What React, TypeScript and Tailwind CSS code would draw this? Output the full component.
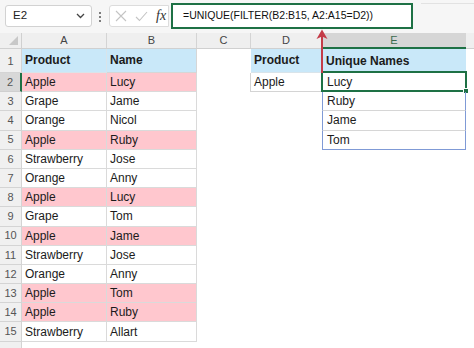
import React from "react";

const PINK = "bg-[#ffc7ce]";
const data: [string, string, boolean][] = [
  ["Apple", "Lucy", true],
  ["Grape", "Jame", false],
  ["Orange", "Nicol", false],
  ["Apple", "Ruby", true],
  ["Strawberry", "Jose", false],
  ["Orange", "Anny", false],
  ["Apple", "Lucy", true],
  ["Grape", "Tom", false],
  ["Apple", "Jame", true],
  ["Strawberry", "Jose", false],
  ["Orange", "Anny", false],
  ["Apple", "Tom", true],
  ["Apple", "Ruby", true],
  ["Strawberry", "Allart", false],
];
const unique = ["Lucy", "Ruby", "Jame", "Tom"];

export default function App() {
  return (
    <div className="relative w-[474px] h-[348px] overflow-hidden bg-white font-['Liberation_Sans',Arial,sans-serif] text-[#1b1b1b]">
      {/* formula bar */}
      <div className="h-[33px] bg-[#f6f6f6] flex items-start pt-[3px]">
        <div className="mt-[2px] ml-[5px] w-[87px] h-[22px] bg-white border border-[#d2d2d2] rounded-[3px] flex items-center justify-between pl-[7px] pr-[6px]">
          <span className="text-[11.5px] text-[#222]">E2</span>
          <svg width="9" height="6" viewBox="0 0 9 6">
            <path d="M1 1 L4.5 4.5 L8 1" fill="none" stroke="#444" strokeWidth="1.3" />
          </svg>
        </div>
        <div className="ml-[5px] mt-[9px] w-[6px] flex flex-col items-center gap-[2px]">
          <div className="w-[2px] h-[2px] rounded-full bg-[#555]" />
          <div className="w-[2px] h-[2px] rounded-full bg-[#555]" />
          <div className="w-[2px] h-[2px] rounded-full bg-[#555]" />
        </div>
        <div className="ml-[6px] mt-[2px] w-[60px] h-[22px] bg-white border border-[#dcdcdc] rounded-l-[3px] flex items-center pl-[5px]">
          <svg width="12" height="12" viewBox="0 0 12 12">
            <path d="M1 1 L11 11 M11 1 L1 11" stroke="#c4c4c4" strokeWidth="1.1" fill="none" />
          </svg>
          <svg className="ml-[8px]" width="13" height="11" viewBox="0 0 13 11">
            <path d="M1 6 L4.5 9.5 L12 1" stroke="#c4c4c4" strokeWidth="1.1" fill="none" />
          </svg>
          <span className="ml-[8px] font-['Liberation_Serif',serif] italic text-[14px] leading-none text-[#333]">fx</span>
        </div>
        <div className="ml-[2px] w-[242px] h-[26px] border-2 border-[#1e7145] bg-white flex items-center pl-[10px]">
          <span className="text-[10.5px] text-[#111] whitespace-nowrap">=UNIQUE(FILTER(B2:B15, A2:A15=D2))</span>
        </div>
        <div className="flex-1 mt-0 h-px bg-[#e2e2e2] ml-[8px]" />
      </div>

      {/* column headers */}
      <div className="flex h-[16px] bg-[#efefef] border-b border-[#d0d0d0] text-[11px] text-[#444]">
        <div className="relative w-[22px] border-r border-[#d0d0d0]">
          <svg className="absolute left-[9px] top-[3px]" width="9" height="9" viewBox="0 0 9 9">
            <path d="M9 0 L9 9 L0 9 Z" fill="#c8c8c8" />
          </svg>
        </div>
        <div className="w-[85px] border-r border-[#d4d4d4] flex items-center justify-center">A</div>
        <div className="w-[90px] border-r border-[#d4d4d4] flex items-center justify-center">B</div>
        <div className="w-[54px] border-r border-[#d4d4d4] flex items-center justify-center">C</div>
        <div className="w-[71px] border-r border-[#d4d4d4] flex items-center justify-center">D</div>
        <div className="w-[144px] bg-[#d6d6d6] border-b-2 border-[#1e7145] flex items-center justify-center text-[#3d6b4f] -mb-px">E</div>
        <div className="flex-1" />
      </div>

      {/* row 1 */}
      <div className="flex h-[24px] text-[12px]">
        <div className="w-[22px] bg-[#f0f0f0] border-r border-b border-[#d4d4d4] flex items-end justify-center pb-[3px] text-[11px] text-[#555]">1</div>
        <div className="w-[85px] bg-[#c9e8f9] border-r border-b border-[#d9e4ea] flex items-end pl-[3px] pb-[3px] font-bold">Product</div>
        <div className="w-[90px] bg-[#c9e8f9] border-r border-b border-[#d6d6d6] flex items-end pl-[3px] pb-[3px] font-bold">Name</div>
        <div className="w-[54px]" />
        <div className="w-[71px] bg-[#c9e8f9] flex items-end pl-[3px] pb-[3px] font-bold border-b border-[#d9e4ea]">Product</div>
        <div className="w-[144px] bg-[#c9e8f9] flex items-end pl-[4px] pb-[3px] font-bold">Unique Names</div>
        <div className="flex-1" />
      </div>

      {/* data rows */}
      {data.map(([prod, name, pink], i) => {
        const r = i + 2;
        const sel = r === 2;
        const eIdx = r - 2;
        const hasE = eIdx < unique.length;
        return (
          <div key={r} className="flex h-[19.2px] text-[12px]">
            <div
              className={
                sel
                  ? "w-[22px] bg-[#d8d8d8] border-b border-[#cfcfcf] border-r-2 border-r-[#1e7145] flex items-center justify-center text-[11px] text-[#555]"
                  : "w-[22px] bg-[#f0f0f0] border-r border-b border-[#d4d4d4] flex items-center justify-center text-[11px] text-[#555]"
              }
            >
              {r}
            </div>
            <div className={`w-[85px] border-r border-b border-[#dadada] flex items-center pl-[3px] ${pink ? PINK : "bg-white"}`}>{prod}</div>
            <div className={`w-[90px] border-r border-b border-[#dadada] flex items-center pl-[3px] ${pink ? PINK : "bg-white"}`}>{name}</div>
            <div className={sel ? "w-[54px] border-r border-[#d4d4d4]" : "w-[54px]"} />
            <div className={sel ? "w-[71px] border-b border-[#d4d4d4] flex items-center pl-[3px]" : "w-[71px]"}>{sel ? "Apple" : ""}</div>
            {hasE ? (
              <div
                className={`relative w-[144px] border-l border-r border-[#7f9ad6] flex items-center pl-[4px] ${
                  eIdx === 3 ? "border-b border-b-[#7f9ad6]" : "border-b border-b-[#d6d6d6]"
                }`}
              >
                {unique[eIdx]}
                {sel && (
                  <div className="absolute left-[-2px] top-[-2px] right-[-2px] bottom-[-1px] border-2 border-[#1e7145]">
                    <div className="absolute right-[-4px] bottom-[-4px] w-[6px] h-[6px] bg-[#1e7145] border border-white" />
                  </div>
                )}
              </div>
            ) : (
              <div className="w-[144px]" />
            )}
            <div className="flex-1" />
          </div>
        );
      })}

      {/* row 16 partial */}
      <div className="flex h-[19.2px]">
        <div className="w-[22px] bg-[#f0f0f0] border-r border-[#d4d4d4]" />
      </div>

      {/* red arrow */}
      <svg className="absolute left-[315px] top-[28px]" width="14" height="46" viewBox="0 0 14 46">
        <path d="M7 6 L7 45" stroke="#c43c48" strokeWidth="2" />
        <path d="M7 1.5 L12.5 11 L7 8.5 L1.5 11 Z" fill="#c43c48" />
      </svg>
    </div>
  );
}
